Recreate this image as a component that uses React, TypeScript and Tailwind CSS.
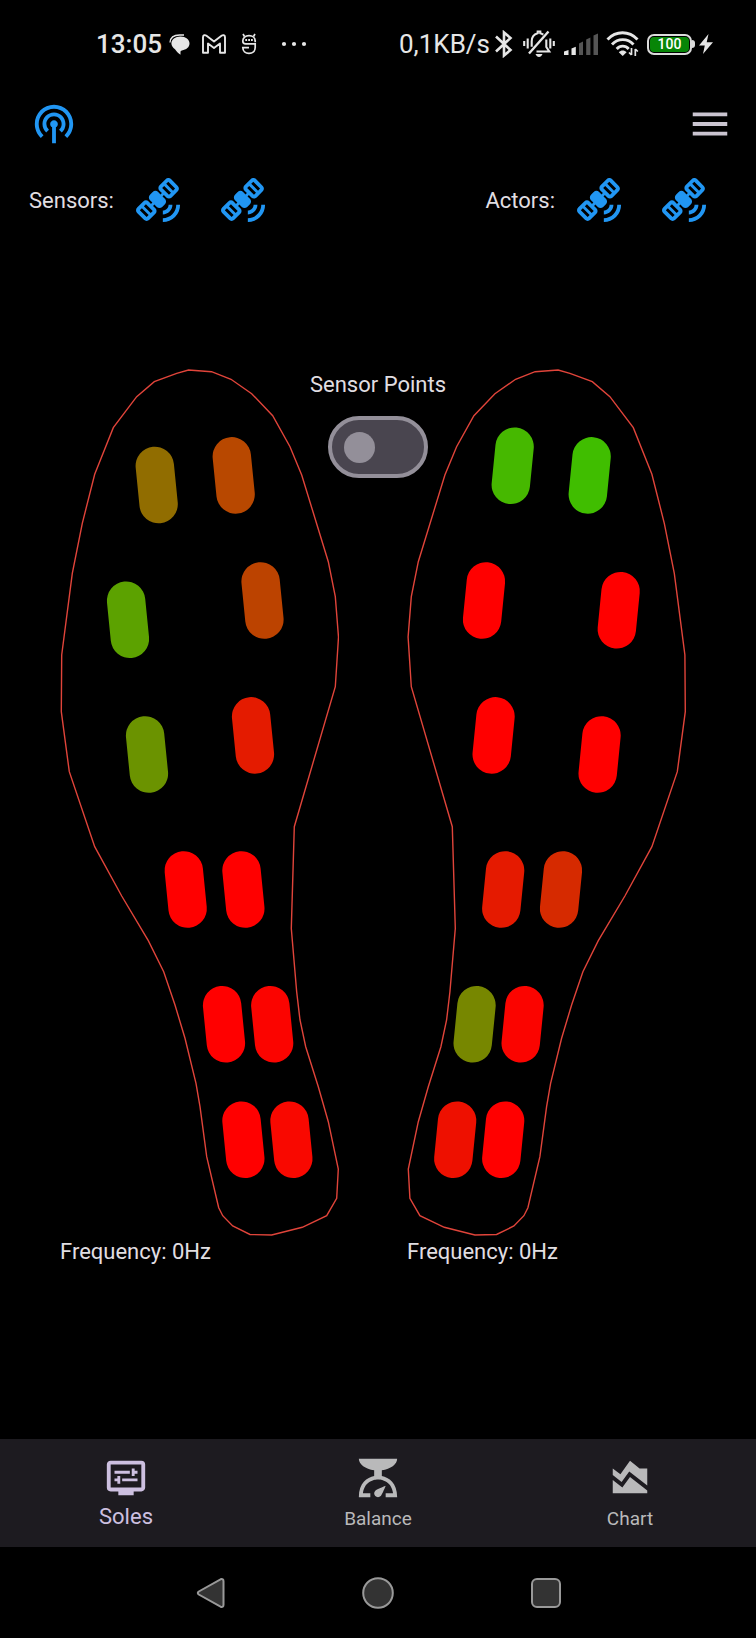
import { useState } from "react";
import {
  MdAreaChart,
  MdDisplaySettings,
  MdMenu,
  MdPodcasts,
  MdSatelliteAlt,
  MdScale,
} from "react-icons/md";

type Sensor = { x: number; y: number; color: string };

const LEFT_SENSORS: Sensor[] = [
  { x: 156.7, y: 485, color: "#916d00" },
  { x: 233.7, y: 475.4, color: "#b84800" },
  { x: 128, y: 619.8, color: "#5ca200" },
  { x: 262.5, y: 600.5, color: "#bc4300" },
  { x: 147, y: 754.5, color: "#6b9300" },
  { x: 253, y: 735.4, color: "#e41b00" },
  { x: 185.7, y: 889.5, color: "#ff0000" },
  { x: 243.4, y: 889.5, color: "#ff0000" },
  { x: 224, y: 1024.3, color: "#ff0000" },
  { x: 272.2, y: 1024.3, color: "#fb0400" },
  { x: 243.4, y: 1139.7, color: "#ff0000" },
  { x: 291.4, y: 1139.7, color: "#f90800" },
];

const RIGHT_SENSORS: Sensor[] = [
  { x: 512.7, y: 465.8, color: "#46b800" },
  { x: 589.7, y: 475.4, color: "#40be00" },
  { x: 484, y: 600.5, color: "#ff0000" },
  { x: 618.7, y: 610.2, color: "#ff0000" },
  { x: 493.6, y: 735.4, color: "#ff0000" },
  { x: 599.6, y: 754.5, color: "#ff0000" },
  { x: 503.2, y: 889.5, color: "#e51a00" },
  { x: 561, y: 889.5, color: "#d62a00" },
  { x: 474.6, y: 1024.3, color: "#778700" },
  { x: 522.6, y: 1024.3, color: "#fb0400" },
  { x: 455.2, y: 1139.7, color: "#ee1000" },
  { x: 503.2, y: 1139.7, color: "#ff0000" },
];

const OUTLINE =
  "188.5,370 211.5,371.7 231,379.3 251.7,393.7 272.7,415.7 290,446.7 301.7,475 328.3,561.7 335.3,596.7 338.5,637 335.3,686.7 294.3,826.7 291.3,928.5 296.7,992 300,1020 305.7,1046.7 318.3,1086.7 328.3,1121.7 338.3,1169 336.7,1198.3 326.7,1215.7 302.3,1227.3 271.7,1235 250,1234.5 232.7,1226 222.7,1215.7 218.7,1207.7 206.7,1156.7 200,1106.7 196,1083.3 185,1038.3 175,1005 163.7,971.7 148.3,940.7 121.7,896 94.7,846.7 69.3,771.7 61.3,711.7 61.7,655 72.3,573.3 82.3,523.3 94.7,474.3 113.3,427.7 136.7,396.7 154.3,381.7 176.7,373.3";

function Sole({ side, sensors }: { side: "left" | "right"; sensors: Sensor[] }) {
  const left = side === "left";
  return (
    <section className="min-w-0 flex-1">
      <svg
        viewBox={left ? "60 369 279 867" : "407 369 279 867"}
        className="block h-auto w-full"
        role="img"
        aria-label={left ? "Left sole" : "Right sole"}
      >
        <polygon
          points={OUTLINE}
          transform={left ? undefined : "matrix(-1 0 0 1 746.6 0)"}
          fill="none"
          stroke="#e0443a"
          strokeWidth="1.4"
        />
        {sensors.map((s) => (
          <rect
            key={`${s.x}-${s.y}`}
            x={s.x - 19.2}
            y={s.y - 38.4}
            width="38.4"
            height="76.8"
            rx="19.2"
            fill={s.color}
            transform={`rotate(${left ? -5.7 : 5.7} ${s.x} ${s.y})`}
          />
        ))}
      </svg>
      <p className="text-[22px] leading-[32px] whitespace-nowrap">Frequency: 0Hz</p>
    </section>
  );
}

function DeviceGroup({ label }: { label: string }) {
  return (
    <div className="flex items-center">
      <span className="text-[22px] leading-[32px]">{label}</span>
      <div className="ml-[22px] flex gap-[39px] text-[#2196f3]">
        <button type="button" aria-label={`${label} left device`}>
          <MdSatelliteAlt className="size-[46px]" />
        </button>
        <button type="button" aria-label={`${label} right device`}>
          <MdSatelliteAlt className="size-[46px]" />
        </button>
      </div>
    </div>
  );
}

function StatusBar() {
  return (
    <div className="flex h-[88px] items-center justify-between pr-[43px] pl-24 text-[#e6e6e6]">
      <div className="flex items-center">
        <span className="text-[26px] leading-[30px] font-medium">13:05</span>
        <svg viewBox="0 0 21 21" className="ml-[7px] h-[21px] w-[21px]">
          <path d="M1 8.500C1.300 3.800 5 .9 11 1h4" fill="none" stroke="currentColor" strokeWidth="1.300" />
          <path
            d="M11.500 2.600c5.200 0 9 2.900 9 6.900 0 3.600-3.200 6.400-7.600 6.900-.9.100-1.400.6-1.400 1.500v2.800C9 19.500 7.500 17.200 6 15.300 3.800 13.500 2.400 11.800 2.400 9.500c0-4 3.900-6.900 9.100-6.900z"
            fill="currentColor"
          />
        </svg>
        <svg viewBox="0 0 24 20" className="ml-3 h-5 w-6">
          <path
            d="M1 3.200C1 1 3 .700 4.500 1.800L12 7.500l7.500-5.700C21 .700 23 1 23 3.200V18.800h-5V9.500l-6 4.600-6-4.600v9.300H1z"
            fill="none"
            stroke="currentColor"
            strokeWidth="1.900"
            strokeLinejoin="round"
          />
        </svg>
        <svg viewBox="0 0 16 22" className="ml-[15px] h-[22px] w-4" fill="none" stroke="currentColor" strokeWidth="1.700">
          <path d="M14.200 8C14.200 4.700 11.500 2.700 8 2.700S1.800 4.700 1.800 8c0 2 1 2.900 2.800 2.900h9.600v3.600c0 3.600-2.700 5.900-6.200 5.900s-6.200-2.200-6.200-5.800H8" />
          <path d="M14.200 7.500v1.800M3.500 3.500 2 1M12.500 3.500 14 1" />
          <path d="M4.300 7h1.800M7.200 7H9M10 7h1.800" strokeWidth="2" />
        </svg>
        <svg viewBox="0 0 26 6" className="ml-6 h-[6px] w-[26px]" fill="currentColor">
          <circle cx="3" cy="3" r="2.100" />
          <circle cx="13" cy="3" r="2.100" />
          <circle cx="23" cy="3" r="2.100" />
        </svg>
      </div>
      <div className="flex items-center">
        <span className="text-[26px] leading-[30px]">0,1KB/s</span>
        <svg
          viewBox="0 0 28 28"
          className="size-7"
          fill="none"
          stroke="currentColor"
          strokeWidth="2.600"
        >
          <path d="M6 6.500 20.500 20 14 25.500V2.500L20.500 8 6 21.500" />
        </svg>
        <svg viewBox="0 0 32 28" className="ml-[5px] h-7 w-8" fill="none" stroke="currentColor" strokeWidth="2.100">
          <path d="M1.200 11v5M4.700 8.500v10M30.800 11v5M27.300 8.500v10" />
          <path d="M20.300 4.700C19 3.700 18 3.400 17.300 3.200V1.500h-2.600v1.700C10.500 4.200 8.700 7.500 8.700 11.500v5.200M23.300 9.500v7.500l3 4.500H13.500" />
          <path d="M6 23.500 25.500 1.500" strokeWidth="2.400" />
          <path d="M12.500 24h7c-.8 2-2 3-3.500 3s-2.700-1-3.500-3z" fill="currentColor" stroke="none" />
        </svg>
        <svg viewBox="0 0 34 22" className="ml-[9px] h-[22px] w-[34px]" fill="currentColor">
          <path d="M0 18.500 4.500 17v5H0zM7.500 15.500l4.300-1.700V22H7.500z" />
          <path d="M15 10.500l4-1.900V22h-4zM22.200 6.500l4.200-2V22h-4.200zM29.500 2.500 34 .5V22h-4.500z" fill="#555" />
        </svg>
        <svg viewBox="0 0 34 26" className="ml-2 h-[26px] w-[34px]" fill="none" stroke="currentColor" strokeWidth="2.900">
          <path d="M1.500 8.500C10-.500 23-.500 31.500 8.500M6 13.500c6-6.500 15.500-6.500 21.500 0M10.700 18c3.500-3.800 8.600-3.800 12 0" />
          <path d="M12.800 21.200c2.200-2.300 5.600-2.300 7.800 0L16.700 25z" fill="currentColor" stroke="none" />
          <path d="M25.500 17v7M29.300 18v7M23 21.500l2.500 2.500M29.300 18l2.500 2.500" strokeWidth="1.700" />
        </svg>
        <div className="ml-[7px] flex items-center">
          <div className="flex h-[21px] w-[45px] items-center justify-center rounded-[7px] border-2 border-[#dcdcdc] bg-black p-px">
            <span className="flex h-full w-full items-center justify-center rounded-[4px] bg-[#078507] text-[14px] leading-none font-medium text-white">
              100
            </span>
          </div>
          <span className="h-2 w-[3px] rounded-r-full bg-[#dcdcdc]" />
        </div>
        <svg viewBox="0 0 14 20" className="ml-1 h-5 w-[14px]" fill="currentColor">
          <path d="M9.500 0 0 11.500h5.800L4 20 14 8.200H7.700z" />
        </svg>
      </div>
    </div>
  );
}

function SystemNav() {
  return (
    <div className="flex h-[91px] items-center justify-center gap-[136px]">
      <button type="button" aria-label="Back">
        <svg viewBox="0 0 32 32" className="size-8">
          <path
            d="M4.800 14.500 26.500 2.300q3-1 3 2v23.400q0 3-3 2L4.800 17.500q-2-1.500 0-3z"
            fill="#333"
            stroke="#999"
            strokeWidth="2"
          />
        </svg>
      </button>
      <button type="button" aria-label="Home">
        <svg viewBox="0 0 32 32" className="size-8">
          <circle cx="16" cy="16" r="14.800" fill="#333" stroke="#999" strokeWidth="2" />
        </svg>
      </button>
      <button type="button" aria-label="Recent apps">
        <svg viewBox="0 0 32 32" className="size-8">
          <rect x="2" y="2" width="28" height="28" rx="5" fill="#333" stroke="#999" strokeWidth="2" />
        </svg>
      </button>
    </div>
  );
}

export default function App() {
  const [showPoints, setShowPoints] = useState(false);

  return (
    <div className="flex min-h-screen flex-col bg-black font-['Roboto',sans-serif] text-[#e0dee2]">
      <StatusBar />
      <header className="flex h-[72px] items-center justify-between pr-[23px] pl-[31px]">
        <button type="button" aria-label="Connection" className="text-[#2196f3]">
          <MdPodcasts className="size-[46px]" />
        </button>
        <button type="button" aria-label="Menu" className="text-[#cac4d0]">
          <MdMenu className="size-[46px]" />
        </button>
      </header>

      <main className="flex flex-1 flex-col">
        <div className="flex h-[82px] items-center justify-between pr-12 pl-[29px]">
          <DeviceGroup label="Sensors:" />
          <DeviceGroup label="Actors:" />
        </div>

        <div className="relative mt-[127px] flex gap-[68px] pr-[70px] pl-[60px]">
          <Sole side="left" sensors={LEFT_SENSORS} />
          <Sole side="right" sensors={RIGHT_SENSORS} />
          <label className="absolute inset-x-0 top-0 mx-auto flex w-fit cursor-pointer flex-col items-center gap-[15px]">
            <span className="text-[22px] leading-[32px] whitespace-nowrap">Sensor Points</span>
            <input
              type="checkbox"
              role="switch"
              checked={showPoints}
              onChange={(e) => setShowPoints(e.target.checked)}
              className="flex h-[62px] w-[100px] cursor-pointer appearance-none items-center rounded-full border-4 border-[#938f99] bg-[#49454f] px-3 before:size-[31px] before:rounded-full before:bg-[#938f99] checked:justify-end checked:border-[#d0bcff] checked:bg-[#d0bcff] checked:before:bg-[#381e72]"
            />
          </label>
        </div>
      </main>

      <nav className="grid h-[108px] grid-cols-3 bg-[#1d1b20] text-[#b9b9ba]">
        <a href="#soles" aria-current="page" className="flex flex-col items-center pt-4 text-[#cdc0e0]">
          <MdDisplaySettings className="size-[46px]" />
          <span className="text-[22px] leading-[32px]">Soles</span>
        </a>
        <a href="#balance" className="flex flex-col items-center pt-4">
          <MdScale className="size-[46px]" />
          <span className="pt-1 text-[19px] leading-[28px]">Balance</span>
        </a>
        <a href="#chart" className="flex flex-col items-center pt-4">
          <MdAreaChart className="size-[46px]" />
          <span className="pt-1 text-[19px] leading-[28px]">Chart</span>
        </a>
      </nav>
      <SystemNav />
    </div>
  );
}
